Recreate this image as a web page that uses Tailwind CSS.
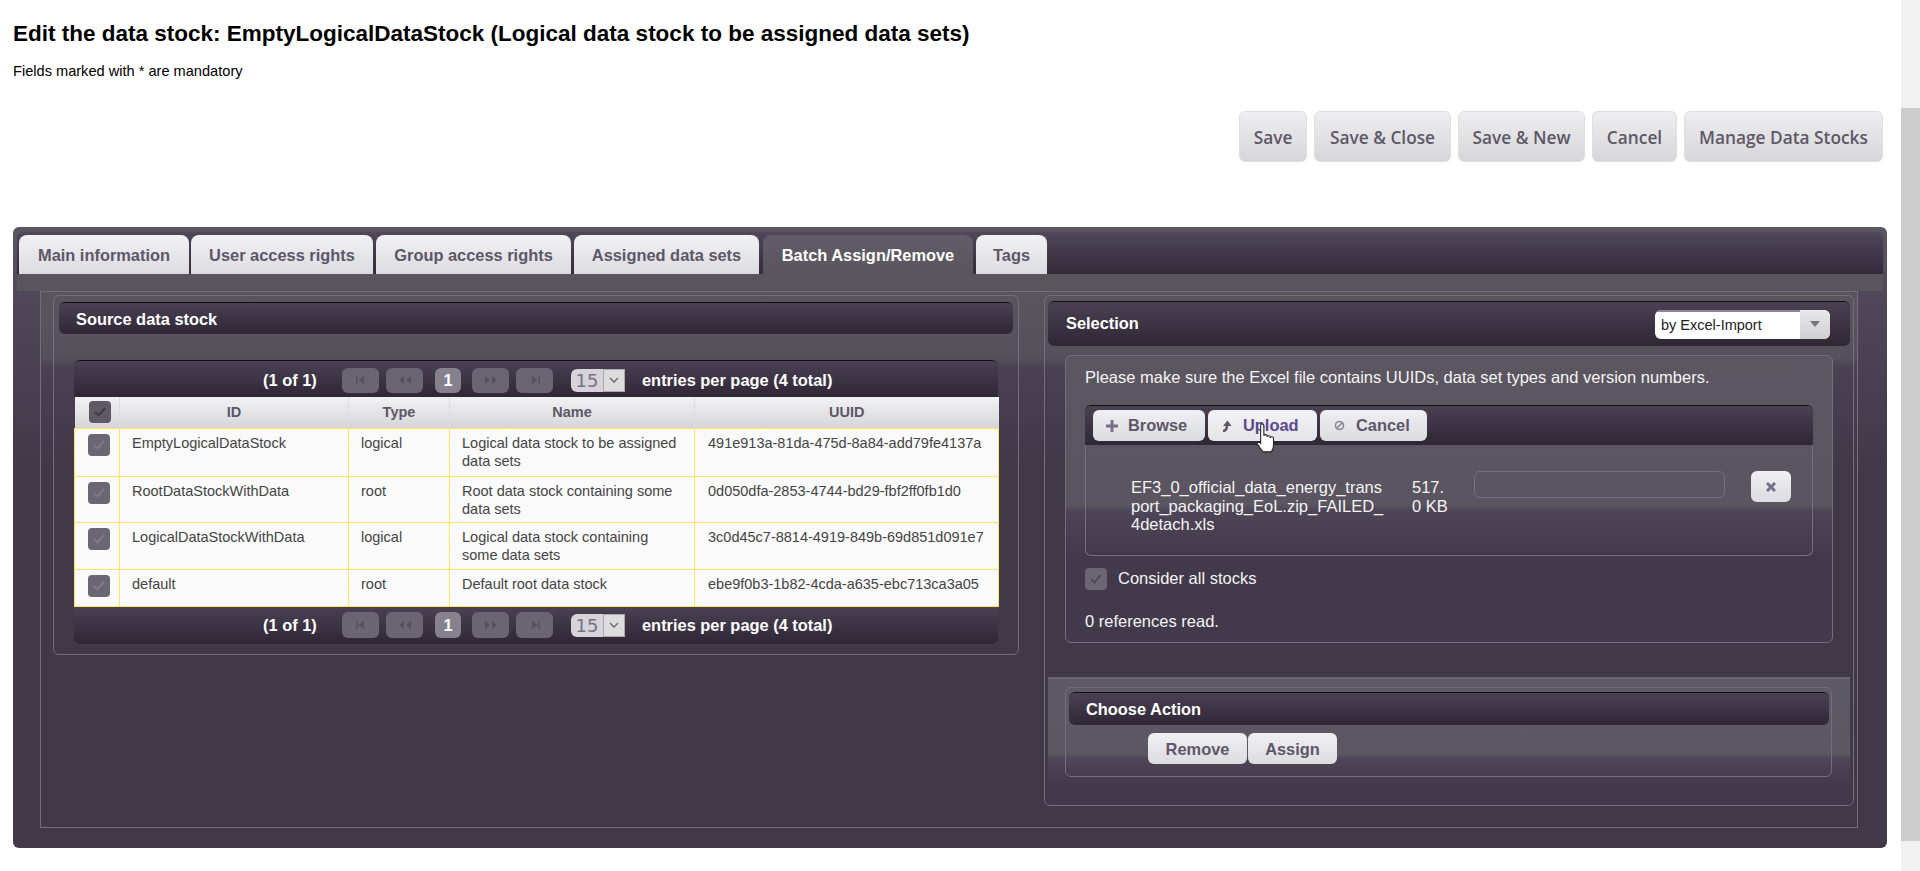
<!DOCTYPE html>
<html lang="en">
<head>
    <meta charset="UTF-8">
    <title>Edit the data stock</title>
    <script src="https://cdn.jsdelivr.net/npm/@tailwindcss/browser@4"></script>
</head>
<body class="bg-white overflow-hidden font-['Liberation_Sans',Arial,sans-serif]">
<div class="flex h-[871px]">
    <main class="relative w-[1901px] h-[871px] shrink-0">
        <h1 class="pl-[13px] pt-[22px] text-[22.5px] leading-[24px] font-bold text-black">Edit the data stock: EmptyLogicalDataStock (Logical data stock to be assigned data sets)</h1>
        <p class="pl-[13px] mt-[17px] text-[14.600px] leading-[16px] text-black">Fields marked with * are mandatory</p>

        <!-- top buttons -->
        <div class="flex justify-end gap-[7px] pr-[18px] mt-[32px] font-['Open_Sans',sans-serif] text-[17.300px] font-semibold text-[#5d5768]">
            <button class="w-[68px] h-[51px] pt-[3px] rounded-md border border-[#dedede] bg-linear-to-b from-[#eeeef0] to-[#d6d6d8]">Save</button>
            <button class="w-[137px] h-[51px] pt-[3px] rounded-md border border-[#dedede] bg-linear-to-b from-[#eeeef0] to-[#d6d6d8]">Save &amp; Close</button>
            <button class="w-[127px] h-[51px] pt-[3px] rounded-md border border-[#dedede] bg-linear-to-b from-[#eeeef0] to-[#d6d6d8]">Save &amp; New</button>
            <button class="w-[85px] h-[51px] pt-[3px] rounded-md border border-[#dedede] bg-linear-to-b from-[#eeeef0] to-[#d6d6d8]">Cancel</button>
            <button class="w-[199px] h-[51px] pt-[3px] rounded-md border border-[#dedede] bg-linear-to-b from-[#eeeef0] to-[#d6d6d8]">Manage Data Stocks</button>
        </div>

        <!-- tab panel -->
        <section class="ml-[13px] w-[1874px] h-[621px] mt-[65px] rounded-md bg-linear-to-b from-[#5b5662] via-[#4f4757] via-[12%] to-[#413848] to-[40%] px-[4px] pt-[5px]">
            <div class="h-[42px] rounded-md rounded-b-none bg-linear-to-b from-[#504959] to-[#332a3a] flex items-end pl-[2px] text-[16.400px] font-bold text-[#5d5768]">
                <a class="w-[170px] h-[39px] pt-[1px] mr-[2px] flex items-center justify-center rounded-t-lg bg-linear-to-b from-[#f2f1f4] to-[#dcdbe0]">Main information</a>
                <a class="w-[182px] h-[39px] pt-[1px] mr-[3px] flex items-center justify-center rounded-t-lg bg-linear-to-b from-[#f2f1f4] to-[#dcdbe0]">User access rights</a>
                <a class="w-[195px] h-[39px] pt-[1px] mr-[3px] flex items-center justify-center rounded-t-lg bg-linear-to-b from-[#f2f1f4] to-[#dcdbe0]">Group access rights</a>
                <a class="w-[185px] h-[39px] pt-[1px] mr-[4px] flex items-center justify-center rounded-t-lg bg-linear-to-b from-[#f2f1f4] to-[#dcdbe0]">Assigned data sets</a>
                <a class="w-[210px] h-[39px] pt-[1px] mr-[3px] flex items-center justify-center rounded-t-lg bg-linear-to-b from-[#625c69] to-[#5a555d] text-white">Batch Assign/Remove</a>
                <a class="w-[71px] h-[39px] pt-[1px] flex items-center justify-center rounded-t-lg bg-linear-to-b from-[#f2f1f4] to-[#dcdbe0]">Tags</a>
            </div>

            <div class="h-[17px] bg-[#5a555d]"></div>

            <!-- outer frame -->
            <div class="ml-[23px] w-[1818px] h-[537px] border border-[#746d7d] pl-[12px] pt-[3px] flex gap-[25px] bg-[linear-gradient(#5a555d,#55505a_12.500%,#4a4253_14%,#413848_32%)]">

                <!-- source data stock -->
                <div class="w-[966px] h-[360px] rounded-md border border-[#746d7d] pl-[5px] pt-[6px]">
                    <div class="w-[954px] h-[32px] pt-[2px] rounded-md border-t border-black/60 bg-linear-to-b from-[#4a4252] to-[#2f2636] flex items-center pl-[17px] text-[16.400px] font-bold text-white">Source data stock</div>

                    <div class="ml-[15px] mt-[26px] w-[924px]">
                        <div class="h-[37px] rounded-t-md border-t border-black/60 bg-linear-to-b from-[#4a4252] to-[#2f2636] flex items-center text-[16.400px] font-bold text-white pl-[189px] pt-[2px]">
                            <span class="w-[79px]">(1 of 1)</span>
                            <span class="w-[37px] h-[25px] rounded-md bg-[#6b6573] flex items-center justify-center text-[#55505e]"><svg width="12" height="8" viewBox="0 0 12 8" fill="currentColor"><path d="M1 0h1.500v8H1zM9 0v8L3.500 4z"/></svg></span>
                            <span class="w-[37px] h-[25px] ml-[7px] rounded-md bg-[#6b6573] flex items-center justify-center text-[#55505e]"><svg width="14" height="8" viewBox="0 0 14 8" fill="currentColor"><path d="M6 0v8L1 4zM13 0v8L8 4z"/></svg></span>
                            <span class="w-[26px] h-[25px] ml-[12px] rounded-md bg-[#86818d] flex items-center justify-center">1</span>
                            <span class="w-[37px] h-[25px] ml-[11px] rounded-md bg-[#6b6573] flex items-center justify-center text-[#55505e]"><svg width="14" height="8" viewBox="0 0 14 8" fill="currentColor"><path d="M1 0v8l5-4zM8 0v8l5-4z"/></svg></span>
                            <span class="w-[37px] h-[25px] ml-[7px] rounded-md bg-[#6b6573] flex items-center justify-center text-[#55505e]"><svg width="12" height="8" viewBox="0 0 12 8" fill="currentColor"><path d="M3 0v8l5.500-4zM9.500 0H11v8H9.500z"/></svg></span>
                            <span class="w-[54px] h-[23px] ml-[18px] flex rounded-l-md overflow-hidden bg-[#d6d3da] text-[#77727f] text-[18px] font-['DejaVu_Sans',sans-serif] font-normal">
                                <span class="w-[32px] text-center leading-[24px]">15</span>
                                <span class="w-[22px] bg-[#dcdcdc] border border-[#aaa] flex items-center justify-center"><svg width="10" height="6" viewBox="0 0 10 6" fill="none" stroke="#666" stroke-width="1.300"><path d="M1 1l4 4 4-4"/></svg></span>
                            </span>
                            <span class="ml-[17px]">entries per page (4 total)</span>
                        </div>

                        <table class="table-fixed w-[924px] border-collapse text-[14.500px] leading-[18px] text-[#444]">
                            <colgroup><col class="w-[45px]"><col class="w-[229px]"><col class="w-[101px]"><col class="w-[245px]"><col class="w-[304px]"></colgroup>
                            <thead>
                                <tr class="h-[31px] bg-linear-to-b from-[#f2f2f4] to-[#d6d6d9] text-[#5d5768] font-bold text-center">
                                    <th class="border-r border-[#dedee2]"><span class="ml-[14px] w-[22px] h-[22px] rounded-sm bg-[#5f5a66] flex items-center justify-center"><svg width="12" height="10" viewBox="0 0 12 10" fill="none" stroke="#3e3a44" stroke-width="2"><path d="M1 5l3.500 3.500L11 1"/></svg></span></th>
                                    <th class="border-r border-[#dedee2]">ID</th>
                                    <th class="border-r border-[#dedee2]">Type</th>
                                    <th class="border-r border-[#dedee2]">Name</th>
                                    <th>UUID</th>
                                </tr>
                            </thead>
                            <tbody class="bg-[#fafafa]">
                                <tr class="h-[48px] align-top">
                                    <td class="border border-[#ffe45c] pt-[5px]"><span class="ml-[13px] w-[22px] h-[22px] rounded-sm bg-[#6b6673] flex items-center justify-center"><svg width="12" height="10" viewBox="0 0 12 10" fill="none" stroke="#7f7a8a" stroke-width="2"><path d="M1 5l3.500 3.500L11 1"/></svg></span></td>
                                    <td class="border border-[#ffe45c] pl-[12px] pt-[5px]">EmptyLogicalDataStock</td>
                                    <td class="border border-[#ffe45c] pl-[12px] pt-[5px]">logical</td>
                                    <td class="border border-[#ffe45c] pl-[12px] pr-[12px] pt-[5px]">Logical data stock to be assigned data sets</td>
                                    <td class="border border-[#ffe45c] pl-[13px] pt-[5px]">491e913a-81da-475d-8a84-add79fe4137a</td>
                                </tr>
                                <tr class="h-[46px] align-top">
                                    <td class="border border-[#ffe45c] pt-[5px]"><span class="ml-[13px] w-[22px] h-[22px] rounded-sm bg-[#6b6673] flex items-center justify-center"><svg width="12" height="10" viewBox="0 0 12 10" fill="none" stroke="#7f7a8a" stroke-width="2"><path d="M1 5l3.500 3.500L11 1"/></svg></span></td>
                                    <td class="border border-[#ffe45c] pl-[12px] pt-[5px]">RootDataStockWithData</td>
                                    <td class="border border-[#ffe45c] pl-[12px] pt-[5px]">root</td>
                                    <td class="border border-[#ffe45c] pl-[12px] pr-[12px] pt-[5px]">Root data stock containing some data sets</td>
                                    <td class="border border-[#ffe45c] pl-[13px] pt-[5px]">0d050dfa-2853-4744-bd29-fbf2ff0fb1d0</td>
                                </tr>
                                <tr class="h-[47px] align-top">
                                    <td class="border border-[#ffe45c] pt-[5px]"><span class="ml-[13px] w-[22px] h-[22px] rounded-sm bg-[#6b6673] flex items-center justify-center"><svg width="12" height="10" viewBox="0 0 12 10" fill="none" stroke="#7f7a8a" stroke-width="2"><path d="M1 5l3.500 3.500L11 1"/></svg></span></td>
                                    <td class="border border-[#ffe45c] pl-[12px] pt-[5px]">LogicalDataStockWithData</td>
                                    <td class="border border-[#ffe45c] pl-[12px] pt-[5px]">logical</td>
                                    <td class="border border-[#ffe45c] pl-[12px] pr-[12px] pt-[5px]">Logical data stock containing some data sets</td>
                                    <td class="border border-[#ffe45c] pl-[13px] pt-[5px]">3c0d45c7-8814-4919-849b-69d851d091e7</td>
                                </tr>
                                <tr class="h-[37px] align-top">
                                    <td class="border border-[#ffe45c] pt-[5px]"><span class="ml-[13px] w-[22px] h-[22px] rounded-sm bg-[#6b6673] flex items-center justify-center"><svg width="12" height="10" viewBox="0 0 12 10" fill="none" stroke="#7f7a8a" stroke-width="2"><path d="M1 5l3.500 3.500L11 1"/></svg></span></td>
                                    <td class="border border-[#ffe45c] pl-[12px] pt-[5px]">default</td>
                                    <td class="border border-[#ffe45c] pl-[12px] pt-[5px]">root</td>
                                    <td class="border border-[#ffe45c] pl-[12px] pr-[12px] pt-[5px]">Default root data stock</td>
                                    <td class="border border-[#ffe45c] pl-[13px] pt-[5px]">ebe9f0b3-1b82-4cda-a635-ebc713ca3a05</td>
                                </tr>
                            </tbody>
                        </table>

                        <div class="h-[37px] rounded-b-md bg-linear-to-b from-[#4a4252] to-[#2f2636] flex items-center text-[16.400px] font-bold text-white pl-[189px]">
                            <span class="w-[79px]">(1 of 1)</span>
                            <span class="w-[37px] h-[26px] rounded-md bg-[#6b6573] flex items-center justify-center text-[#55505e]"><svg width="12" height="8" viewBox="0 0 12 8" fill="currentColor"><path d="M1 0h1.500v8H1zM9 0v8L3.500 4z"/></svg></span>
                            <span class="w-[37px] h-[26px] ml-[7px] rounded-md bg-[#6b6573] flex items-center justify-center text-[#55505e]"><svg width="14" height="8" viewBox="0 0 14 8" fill="currentColor"><path d="M6 0v8L1 4zM13 0v8L8 4z"/></svg></span>
                            <span class="w-[26px] h-[26px] ml-[12px] rounded-md bg-[#86818d] flex items-center justify-center">1</span>
                            <span class="w-[37px] h-[26px] ml-[11px] rounded-md bg-[#6b6573] flex items-center justify-center text-[#55505e]"><svg width="14" height="8" viewBox="0 0 14 8" fill="currentColor"><path d="M1 0v8l5-4zM8 0v8l5-4z"/></svg></span>
                            <span class="w-[37px] h-[26px] ml-[7px] rounded-md bg-[#6b6573] flex items-center justify-center text-[#55505e]"><svg width="12" height="8" viewBox="0 0 12 8" fill="currentColor"><path d="M3 0v8l5.500-4zM9.500 0H11v8H9.500z"/></svg></span>
                            <span class="w-[54px] h-[23px] ml-[18px] flex rounded-l-md overflow-hidden bg-[#d6d3da] text-[#77727f] text-[18px] font-['DejaVu_Sans',sans-serif] font-normal">
                                <span class="w-[32px] text-center leading-[24px]">15</span>
                                <span class="w-[22px] bg-[#dcdcdc] border border-[#aaa] flex items-center justify-center"><svg width="10" height="6" viewBox="0 0 10 6" fill="none" stroke="#666" stroke-width="1.300"><path d="M1 1l4 4 4-4"/></svg></span>
                            </span>
                            <span class="ml-[17px]">entries per page (4 total)</span>
                        </div>
                    </div>
                </div>

                <!-- right column -->
                <div class="w-[810px] h-[511px] rounded-md border border-[#746d7d]">
                    <div class="ml-[3px] mt-[5px] w-[802px] h-[45px] rounded-md border-t border-black/60 bg-linear-to-b from-[#4a4252] to-[#2f2636] flex items-center justify-between pl-[18px] pr-[20px] text-[16.400px] font-bold text-white">
                        <span class="-mt-[2px]">Selection</span>
                        <span class="w-[175px] h-[29px] flex rounded-md overflow-hidden bg-white text-[14.500px] font-normal text-[#222]">
                            <span class="w-[145px] pl-[6px] leading-[26px] border-t-2 border-[#8b8692]">by Excel-Import</span>
                            <span class="w-[30px] bg-linear-to-b from-[#e8e8ea] to-[#cfcfd2] flex items-center justify-center"><svg width="10" height="6" viewBox="0 0 10 6" fill="#77727f"><path d="M0 0h10L5 6z"/></svg></span>
                        </span>
                    </div>

                    <!-- excel import box -->
                    <div class="ml-[20px] mt-[9px] w-[768px] h-[288px] rounded-md border border-[#746d7d] pl-[19px] text-[#f4f4f4] bg-[linear-gradient(#5b5660,#5a5560_52%,#4e4658_54%,#423a4a_70%)]">
                        <p class="pt-[12px] text-[16.500px] leading-[18px]">Please make sure the Excel file contains UUIDs, data set types and version numbers.</p>
                        <div class="mt-[19px] w-[728px] h-[40px] rounded-t-md border-t border-black/60 bg-linear-to-b from-[#4a4252] to-[#2f2636] flex items-center gap-[3px] pl-[8px] text-[16.400px] font-bold text-[#5d5768]">
                            <button class="w-[112px] h-[31px] rounded-md bg-linear-to-b from-[#f0eff2] to-[#dcdbe0] flex items-center pl-[13px] gap-[10px]"><svg width="12" height="12" viewBox="0 0 12 12" fill="#77708a"><path d="M4.500 0h3v4.500H12v3H7.500V12h-3V7.500H0v-3h4.500z"/></svg>Browse</button>
                            <button class="w-[109px] h-[31px] rounded-md bg-linear-to-b from-[#f4f3f6] to-[#e4e3e8] flex items-center pl-[14px] gap-[11px] text-[#5c4a8c]"><svg width="10" height="12" viewBox="0 0 10 12" fill="none" stroke="#5d5768" stroke-width="2.400"><path d="M1 11c3 0 4-2 4-7"/><path d="M1 6l4.500-5.500L9.500 6z" fill="#5d5768" stroke="none"/></svg>Upload</button>
                            <button class="w-[107px] h-[31px] rounded-md bg-linear-to-b from-[#f0eff2] to-[#dcdbe0] flex items-center pl-[14px] gap-[11px]"><svg width="11" height="11" viewBox="0 0 11 11" fill="none" stroke="#8a8594" stroke-width="1.600"><circle cx="5.500" cy="5.500" r="4"/><path d="M2.800 8.200l5.400-5.400"/></svg>Cancel</button>
                        </div>
                        <div class="w-[728px] h-[111px] rounded-b-md border-x border-b border-[#77707f] pl-[45px] pt-[33px] flex text-[16.500px] leading-[18.700px] text-[#f4f4f4]">
                            <div class="w-[281px] pr-[21px] break-all">EF3_0_official_data_energy_transport_packaging_EoL.zip_FAILED_4detach.xls</div>
                            <div class="w-[38px] break-all">517.0 KB</div>
                            <div class="w-[251px] h-[27px] ml-[24px] rounded-md border border-[#77707f] -mt-[7px]"></div>
                            <button class="w-[40px] h-[31px] ml-[26px] -mt-[7px] rounded-md bg-linear-to-b from-[#f0eff2] to-[#dcdbe0] flex items-center justify-center"><svg width="10" height="10" viewBox="0 0 10 10" stroke="#77708a" stroke-width="3"><path d="M1 1l8 8M9 1l-8 8"/></svg></button>
                        </div>
                        <div class="mt-[12px] flex items-center gap-[11px] text-[16.500px]">
                            <span class="w-[22px] h-[22px] rounded-sm bg-[#6b6673] flex items-center justify-center"><svg width="12" height="10" viewBox="0 0 12 10" fill="none" stroke="#4f4a56" stroke-width="2"><path d="M1 5l3.500 3.500L11 1"/></svg></span>
                            <span class="-mt-[2px]">Consider all stocks</span>
                        </div>
                        <p class="mt-[21px] text-[16.500px] leading-[18px]">0 references read.</p>
                    </div>

                    <!-- choose action -->
                    <div class="ml-[3px] mt-[34px] w-[802px] h-[128px] border-t-2 border-[#6a6472] pt-[8px] bg-[linear-gradient(#5f5a68,#5b5660_60%,#4e4658_63%,#423a4a_85%)]">
                        <div class="ml-[17px] w-[767px] h-[90px] rounded-md border border-[#746d7d]">
                            <div class="ml-[3px] mt-[4px] w-[760px] h-[33px] rounded-md border-t border-black/60 bg-linear-to-b from-[#4a4252] to-[#2f2636] flex items-center pl-[17px] text-[16.400px] font-bold text-white">Choose Action</div>
                            <div class="ml-[82px] mt-[8px] flex text-[16.400px] font-bold text-[#5d5768]">
                                <button class="w-[99px] h-[31px] pt-[1px] rounded-md bg-linear-to-b from-[#f0eff2] to-[#dcdbe0]">Remove</button>
                                <button class="w-[89px] h-[31px] pt-[1px] ml-[1px] rounded-md bg-linear-to-b from-[#f0eff2] to-[#dcdbe0]">Assign</button>
                            </div>
                        </div>
                    </div>
                </div>
            </div>
        </section>

        <!-- mouse cursor over Upload -->
        <svg class="absolute left-[1255px] top-[423px]" width="22" height="31" viewBox="0 0 20 29"><path d="M5 2.500c0-2 3-2 3 0V12c0-1.500 3-1.500 3 0v1c0-1.500 3-1.500 3 0v1c0-1.500 3-1.500 3 0v7c0 3-1 4-2 6H7c-1-2-3-4-5-7-1-2 1-3 3-1z" fill="#fff" stroke="#222" stroke-width="1"/></svg>
    </main>

    <!-- scrollbar -->
    <aside class="w-[19px] h-[871px] bg-[#f1f1f1] pt-[108px]">
        <div class="h-[733px] bg-[#cdcdcd]"></div>
    </aside>
</div>
</body>
</html>
